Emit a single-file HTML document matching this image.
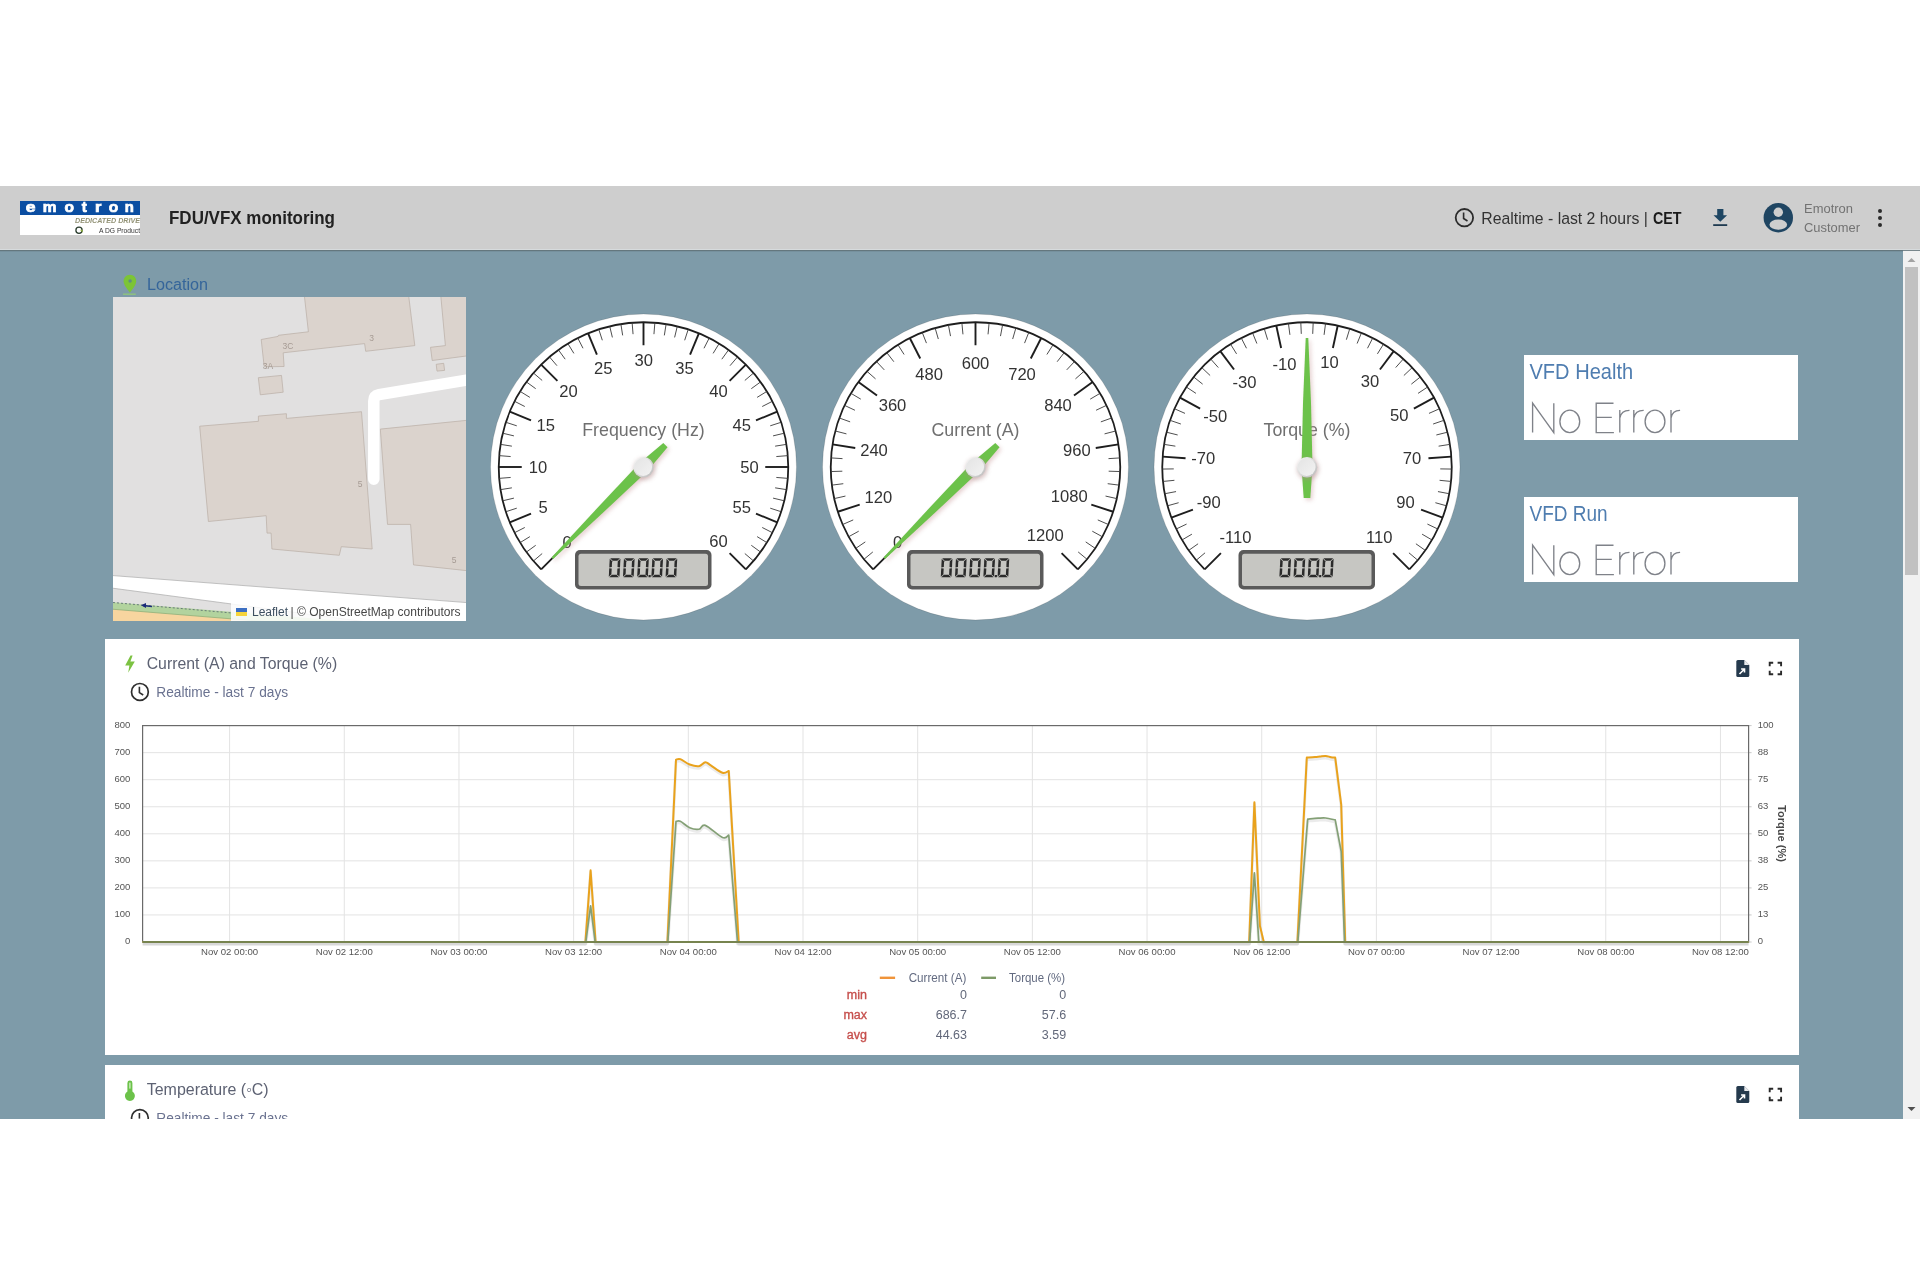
<!DOCTYPE html>
<html><head><meta charset="utf-8"><style>
html,body{margin:0;padding:0;background:#fff;}
svg{display:block;will-change:transform;font-family:'Liberation Sans', sans-serif;}
</style></head><body>
<svg width="1920" height="1280" viewBox="0 0 1920 1280">
<defs><filter id="blur2" x="-50%" y="-50%" width="200%" height="200%"><feGaussianBlur stdDeviation="2"/></filter><linearGradient id="hubOuter" x1="0" y1="0" x2="1" y2="1"><stop offset="0" stop-color="#fbfbfb"/><stop offset="1" stop-color="#b9b9b9"/></linearGradient><linearGradient id="hubInner" x1="0" y1="0" x2="1" y2="1"><stop offset="0" stop-color="#e4e4e4"/><stop offset="1" stop-color="#f2f2f2"/></linearGradient></defs>
<rect x="0" y="0" width="1920" height="1280" fill="#fff"/>
<rect x="0" y="250" width="1903" height="869" fill="#7e9ba9"/>
<rect x="0" y="186" width="1920" height="64" fill="#cecece"/>
<rect x="0" y="249.2" width="1920" height="1" fill="#d9dee0"/><rect x="0" y="250.2" width="1920" height="1" fill="#5a6c72"/>
<rect x="1903" y="251" width="17" height="868" fill="#f1f1f1"/>
<rect x="1905" y="267" width="13" height="308" fill="#c1c1c1"/>
<path d="M1907.5 262 L1911.5 258 L1915.5 262 Z" fill="#a3a3a3"/>
<path d="M1907.5 1107 L1911.5 1111 L1915.5 1107 Z" fill="#505050"/>
<rect x="20" y="201" width="120" height="34" fill="#fff"/>
<rect x="20" y="201" width="120" height="14" fill="#0b4ea2"/>
<text x="25.8" y="211.9" font-size="14.8" fill="#fff" font-weight="bold" text-anchor="start" textLength="9.8" lengthAdjust="spacingAndGlyphs" stroke="#fff" stroke-width="0.7">e</text>
<text x="42.8" y="211.9" font-size="14.8" fill="#fff" font-weight="bold" text-anchor="start" textLength="13.8" lengthAdjust="spacingAndGlyphs" stroke="#fff" stroke-width="0.7">m</text>
<text x="64.4" y="211.9" font-size="14.8" fill="#fff" font-weight="bold" text-anchor="start" textLength="9.5" lengthAdjust="spacingAndGlyphs" stroke="#fff" stroke-width="0.7">o</text>
<text x="81.7" y="211.9" font-size="14.8" fill="#fff" font-weight="bold" text-anchor="start" textLength="5.1" lengthAdjust="spacingAndGlyphs" stroke="#fff" stroke-width="0.7">t</text>
<text x="94.9" y="211.9" font-size="14.8" fill="#fff" font-weight="bold" text-anchor="start" textLength="6.4" lengthAdjust="spacingAndGlyphs" stroke="#fff" stroke-width="0.7">r</text>
<text x="108.8" y="211.9" font-size="14.8" fill="#fff" font-weight="bold" text-anchor="start" textLength="9.5" lengthAdjust="spacingAndGlyphs" stroke="#fff" stroke-width="0.7">o</text>
<text x="124.7" y="211.9" font-size="14.8" fill="#fff" font-weight="bold" text-anchor="start" textLength="9.1" lengthAdjust="spacingAndGlyphs" stroke="#fff" stroke-width="0.7">n</text>
<text x="75" y="222.8" font-size="6.8" fill="#939377" font-weight="bold" text-anchor="start" textLength="65" lengthAdjust="spacingAndGlyphs" font-style="italic">DEDICATED DRIVE</text>
<circle cx="79" cy="230.3" r="3.1" fill="none" stroke="#2c3e2f" stroke-width="1.3"/><path d="M80.5 230.3 h1.6 v1.8" stroke="#9bbf3a" stroke-width="1" fill="none"/>
<text x="99" y="233" font-size="7.2" fill="#333" text-anchor="start" textLength="41" lengthAdjust="spacingAndGlyphs">A DG Product</text>
<text x="169" y="223.8" font-size="18.7" fill="#212121" font-weight="bold" text-anchor="start" textLength="166" lengthAdjust="spacingAndGlyphs">FDU/VFX monitoring</text>
<circle cx="1464.4" cy="217.7" r="8.7" fill="none" stroke="#2b2b2b" stroke-width="1.8"/>
<path d="M1463.6 212.5 V218.5 L1467.5 221" fill="none" stroke="#2b2b2b" stroke-width="1.6"/>
<text x="1481.3" y="223.7" font-size="17.1" fill="#333" text-anchor="start" textLength="166.5" lengthAdjust="spacingAndGlyphs">Realtime - last 2 hours |</text>
<text x="1653" y="223.7" font-size="17.1" fill="#1a1a1a" font-weight="bold" text-anchor="start" textLength="28.5" lengthAdjust="spacingAndGlyphs">CET</text>
<path d="M1717.2 209 h6.2 v6.2 h3.7 l-6.8 6.5 l-6.8 -6.5 h3.7 z" fill="#1e4663"/><rect x="1713.2" y="224.2" width="14" height="1.8" fill="#1e3a50"/>
<circle cx="1778.3" cy="217.7" r="14.7" fill="#1f4562"/>
<circle cx="1778.3" cy="212.2" r="4.7" fill="#cecece"/>
<ellipse cx="1778.3" cy="224.7" rx="8.8" ry="5.1" fill="#cecece"/>
<text x="1804" y="213" font-size="12.6" fill="#727272" text-anchor="start" textLength="49" lengthAdjust="spacingAndGlyphs">Emotron</text>
<text x="1804" y="232" font-size="12.6" fill="#727272" text-anchor="start" textLength="56" lengthAdjust="spacingAndGlyphs">Customer</text>
<circle cx="1880" cy="211" r="2" fill="#2b2b2b"/>
<circle cx="1880" cy="218" r="2" fill="#2b2b2b"/>
<circle cx="1880" cy="225" r="2" fill="#2b2b2b"/>
<g>
<path d="M129.9 274.8 c-3.5 0 -6.3 2.8 -6.3 6.4 c0 4.6 6.3 11.2 6.3 11.2 s6.3 -6.6 6.3 -11.2 c0 -3.6 -2.8 -6.4 -6.3 -6.4 z" fill="#7cc436"/>
<circle cx="130.1" cy="281" r="1.7" fill="#5f8f80"/>
<rect x="123" y="293.4" width="12.8" height="1.6" fill="#8cbf82"/>
<text x="147" y="289.8" font-size="17.3" fill="#35659a" text-anchor="start" textLength="61" lengthAdjust="spacingAndGlyphs">Location</text>
</g>
<svg x="113" y="297" width="353" height="324" viewBox="113 297 353 324" overflow="hidden">
<rect x="113" y="297" width="353" height="324" fill="#e1e0e0"/>
<polygon points="304.4,296.0 408.7,296.0 414.8,345.6 365.7,351.3 364.6,343.6 283.2,352.8 284.1,366.5 264.2,366.8 261.2,339.5 278.1,336.4 278.4,335.3 308.4,331.8" fill="#dbd3cd" stroke="#b9aea5" stroke-width="0.7"/>
<polygon points="258.3,377.7 281.5,375.4 283.2,392.2 260.3,394.8" fill="#dbd3cd" stroke="#b9aea5" stroke-width="0.7"/>
<polygon points="440.8,296.0 470.0,296.0 470.0,355.5 432.2,360.5 430.5,347.3 445.4,345.6" fill="#dbd3cd" stroke="#b9aea5" stroke-width="0.7"/>
<polygon points="436.2,364.3 443.7,363.3 444.6,370.4 437.0,371.1" fill="#dbd3cd" stroke="#b9aea5" stroke-width="0.7"/>
<polygon points="199.7,426.2 258.4,421.3 258.4,416.1 286.4,413.7 286.4,418.4 361.5,411.7 372.2,549.0 341.3,546.7 339.3,555.3 271.9,549.0 271.1,533.1 267.0,533.1 266.2,515.7 208.4,521.5" fill="#dbd3cd" stroke="#b9aea5" stroke-width="0.7"/>
<polygon points="380.3,429.1 470.0,420.0 470.0,571.0 413.5,564.9 410.6,524.4 387.5,524.4" fill="#dbd3cd" stroke="#b9aea5" stroke-width="0.7"/>
<path d="M373.8 479.2 V401 Q373.8 395.6 379 394.6 L480 377.8" fill="none" stroke="#fff" stroke-width="11.5" stroke-linecap="round" stroke-linejoin="round"/>
<path d="M100 574.6 L480 603.6 L480 637 L100 586.5 Z" fill="#fff"/><path d="M100 574.6 L480 603.6 M100 586.5 L480 637" stroke="#a9a9a9" stroke-width="0.7" fill="none"/>
<path d="M100 601.3 L480 632 L100 632 Z" fill="#b2d39e"/>
<path d="M100 608.2 L480 639 L100 639 Z" fill="#f7d59f"/><path d="M100 608.2 L480 639" stroke="#8fb07a" stroke-width="0.8"/>
<path d="M113 602.5 L232 613" fill="none" stroke="#56666e" stroke-width="0.8" stroke-dasharray="2,2"/>
<path d="M143 605.5 L152 606.5" stroke="#1a2a7a" stroke-width="1.4"/><path d="M141 605.3 L146 603 L146 608 Z" fill="#1a2a7a"/>
<text x="371.5" y="340.5" font-size="8.5" fill="#a69b94" text-anchor="middle">3</text>
<text x="288" y="348.5" font-size="8.5" fill="#a69b94" text-anchor="middle">3C</text>
<text x="268" y="368.5" font-size="8.5" fill="#a69b94" text-anchor="middle">3A</text>
<text x="360" y="486.5" font-size="8.5" fill="#a69b94" text-anchor="middle">5</text>
<text x="454" y="562.5" font-size="8.5" fill="#a69b94" text-anchor="middle">5</text>
<rect x="231" y="603" width="235" height="18" fill="#fff" opacity="0.85"/>
<rect x="236" y="608" width="11" height="4" fill="#3c6fc2"/><rect x="236" y="612" width="11" height="4" fill="#f5d43a"/>
<text x="252" y="616.3" font-size="12" fill="#3d4f60" text-anchor="start" textLength="36" lengthAdjust="spacingAndGlyphs">Leaflet</text>
<text x="290.5" y="616.3" font-size="12" fill="#474747" text-anchor="start" textLength="170" lengthAdjust="spacingAndGlyphs">| © OpenStreetMap contributors</text>
</svg>
<rect x="1524" y="355" width="274" height="85" fill="#fff"/>
<text x="1529.5" y="378.7" font-size="21.2" fill="#4f7db0" text-anchor="start" textLength="103.6" lengthAdjust="spacingAndGlyphs">VFD Health</text>
<path d="M1532.6 432.6 V403.2 L1553.8 432.6 V403.2 M1613.5 403.2 H1596.2 V432.6 H1613.9 M1596.2 417.3 H1611.8 M1619.8 432.6 V410.1 M1619.8 418 Q1621.3 410.3 1629.5 410.40000000000003 M1633.8 432.6 V410.1 M1633.8 418 Q1635.3 410.3 1643.7 410.40000000000003 M1671 432.6 V410.1 M1671 418 Q1672.5 410.3 1680.1 410.40000000000003" fill="none" stroke="#7f8289" stroke-width="1.35"/><ellipse cx="1569.8" cy="421.4" rx="9.9" ry="11.2" fill="none" stroke="#7f8289" stroke-width="1.35"/><ellipse cx="1655" cy="421.4" rx="9.9" ry="11.2" fill="none" stroke="#7f8289" stroke-width="1.35"/>
<rect x="1524" y="497" width="274" height="85" fill="#fff"/>
<text x="1529.5" y="520.7" font-size="21.2" fill="#4f7db0" text-anchor="start" textLength="78.2" lengthAdjust="spacingAndGlyphs">VFD Run</text>
<path d="M1532.6 574.6 V545.2 L1553.8 574.6 V545.2 M1613.5 545.2 H1596.2 V574.6 H1613.9 M1596.2 559.3 H1611.8 M1619.8 574.6 V552.1 M1619.8 560 Q1621.3 552.3000000000001 1629.5 552.4 M1633.8 574.6 V552.1 M1633.8 560 Q1635.3 552.3000000000001 1643.7 552.4 M1671 574.6 V552.1 M1671 560 Q1672.5 552.3000000000001 1680.1 552.4" fill="none" stroke="#7f8289" stroke-width="1.35"/><ellipse cx="1569.8" cy="563.4" rx="9.9" ry="11.2" fill="none" stroke="#7f8289" stroke-width="1.35"/><ellipse cx="1655" cy="563.4" rx="9.9" ry="11.2" fill="none" stroke="#7f8289" stroke-width="1.35"/>
<circle cx="643.5" cy="467" r="153" fill="#fff" stroke="#000" stroke-opacity="0.12" stroke-width="1"/>
<path d="M541.15 569.35 A144.75 144.75 0 1 1 745.85 569.35" fill="none" stroke="#1e1e1e" stroke-width="1.8"/>
<line x1="541.15" y1="569.35" x2="557.41" y2="553.09" stroke="#1e1e1e" stroke-width="1.9"/>
<line x1="533.43" y1="561.01" x2="542.18" y2="553.54" stroke="#3a3a3a" stroke-width="0.9"/>
<line x1="526.39" y1="552.08" x2="535.70" y2="545.32" stroke="#3a3a3a" stroke-width="0.9"/>
<line x1="520.08" y1="542.63" x2="529.89" y2="536.62" stroke="#3a3a3a" stroke-width="0.9"/>
<line x1="514.53" y1="532.72" x2="524.77" y2="527.49" stroke="#3a3a3a" stroke-width="0.9"/>
<text x="567.2" y="548.2" font-size="16.6" fill="#333" text-anchor="middle">0</text>
<line x1="509.77" y1="522.39" x2="531.02" y2="513.59" stroke="#1e1e1e" stroke-width="1.9"/>
<line x1="505.83" y1="511.73" x2="516.77" y2="508.18" stroke="#3a3a3a" stroke-width="0.9"/>
<line x1="502.75" y1="500.79" x2="513.93" y2="498.11" stroke="#3a3a3a" stroke-width="0.9"/>
<line x1="500.53" y1="489.64" x2="511.89" y2="487.84" stroke="#3a3a3a" stroke-width="0.9"/>
<line x1="499.20" y1="478.36" x2="510.66" y2="477.45" stroke="#3a3a3a" stroke-width="0.9"/>
<text x="543.2" y="513.4" font-size="16.6" fill="#333" text-anchor="middle">5</text>
<line x1="498.75" y1="467.00" x2="521.75" y2="467.00" stroke="#1e1e1e" stroke-width="1.9"/>
<line x1="499.20" y1="455.64" x2="510.66" y2="456.55" stroke="#3a3a3a" stroke-width="0.9"/>
<line x1="500.53" y1="444.36" x2="511.89" y2="446.16" stroke="#3a3a3a" stroke-width="0.9"/>
<line x1="502.75" y1="433.21" x2="513.93" y2="435.89" stroke="#3a3a3a" stroke-width="0.9"/>
<line x1="505.83" y1="422.27" x2="516.77" y2="425.82" stroke="#3a3a3a" stroke-width="0.9"/>
<text x="538" y="472.9" font-size="16.6" fill="#333" text-anchor="middle">10</text>
<line x1="509.77" y1="411.61" x2="531.02" y2="420.41" stroke="#1e1e1e" stroke-width="1.9"/>
<line x1="514.53" y1="401.28" x2="524.77" y2="406.51" stroke="#3a3a3a" stroke-width="0.9"/>
<line x1="520.08" y1="391.37" x2="529.89" y2="397.38" stroke="#3a3a3a" stroke-width="0.9"/>
<line x1="526.39" y1="381.92" x2="535.70" y2="388.68" stroke="#3a3a3a" stroke-width="0.9"/>
<line x1="533.43" y1="372.99" x2="542.18" y2="380.46" stroke="#3a3a3a" stroke-width="0.9"/>
<text x="545.8" y="431.4" font-size="16.6" fill="#333" text-anchor="middle">15</text>
<line x1="541.15" y1="364.65" x2="557.41" y2="380.91" stroke="#1e1e1e" stroke-width="1.9"/>
<line x1="549.49" y1="356.93" x2="556.96" y2="365.68" stroke="#3a3a3a" stroke-width="0.9"/>
<line x1="558.42" y1="349.89" x2="565.18" y2="359.20" stroke="#3a3a3a" stroke-width="0.9"/>
<line x1="567.87" y1="343.58" x2="573.88" y2="353.39" stroke="#3a3a3a" stroke-width="0.9"/>
<line x1="577.78" y1="338.03" x2="583.01" y2="348.27" stroke="#3a3a3a" stroke-width="0.9"/>
<text x="568.4" y="397.3" font-size="16.6" fill="#333" text-anchor="middle">20</text>
<line x1="588.11" y1="333.27" x2="596.91" y2="354.52" stroke="#1e1e1e" stroke-width="1.9"/>
<line x1="598.77" y1="329.33" x2="602.32" y2="340.27" stroke="#3a3a3a" stroke-width="0.9"/>
<line x1="609.71" y1="326.25" x2="612.39" y2="337.43" stroke="#3a3a3a" stroke-width="0.9"/>
<line x1="620.86" y1="324.03" x2="622.66" y2="335.39" stroke="#3a3a3a" stroke-width="0.9"/>
<line x1="632.14" y1="322.70" x2="633.05" y2="334.16" stroke="#3a3a3a" stroke-width="0.9"/>
<text x="603.3" y="374.1" font-size="16.6" fill="#333" text-anchor="middle">25</text>
<line x1="643.50" y1="322.25" x2="643.50" y2="345.25" stroke="#1e1e1e" stroke-width="1.9"/>
<line x1="654.86" y1="322.70" x2="653.95" y2="334.16" stroke="#3a3a3a" stroke-width="0.9"/>
<line x1="666.14" y1="324.03" x2="664.34" y2="335.39" stroke="#3a3a3a" stroke-width="0.9"/>
<line x1="677.29" y1="326.25" x2="674.61" y2="337.43" stroke="#3a3a3a" stroke-width="0.9"/>
<line x1="688.23" y1="329.33" x2="684.68" y2="340.27" stroke="#3a3a3a" stroke-width="0.9"/>
<text x="643.7" y="366.4" font-size="16.6" fill="#333" text-anchor="middle">30</text>
<line x1="698.89" y1="333.27" x2="690.09" y2="354.52" stroke="#1e1e1e" stroke-width="1.9"/>
<line x1="709.22" y1="338.03" x2="703.99" y2="348.27" stroke="#3a3a3a" stroke-width="0.9"/>
<line x1="719.13" y1="343.58" x2="713.12" y2="353.39" stroke="#3a3a3a" stroke-width="0.9"/>
<line x1="728.58" y1="349.89" x2="721.82" y2="359.20" stroke="#3a3a3a" stroke-width="0.9"/>
<line x1="737.51" y1="356.93" x2="730.04" y2="365.68" stroke="#3a3a3a" stroke-width="0.9"/>
<text x="684.5" y="374.1" font-size="16.6" fill="#333" text-anchor="middle">35</text>
<line x1="745.85" y1="364.65" x2="729.59" y2="380.91" stroke="#1e1e1e" stroke-width="1.9"/>
<line x1="753.57" y1="372.99" x2="744.82" y2="380.46" stroke="#3a3a3a" stroke-width="0.9"/>
<line x1="760.61" y1="381.92" x2="751.30" y2="388.68" stroke="#3a3a3a" stroke-width="0.9"/>
<line x1="766.92" y1="391.37" x2="757.11" y2="397.38" stroke="#3a3a3a" stroke-width="0.9"/>
<line x1="772.47" y1="401.28" x2="762.23" y2="406.51" stroke="#3a3a3a" stroke-width="0.9"/>
<text x="718.5" y="397.3" font-size="16.6" fill="#333" text-anchor="middle">40</text>
<line x1="777.23" y1="411.61" x2="755.98" y2="420.41" stroke="#1e1e1e" stroke-width="1.9"/>
<line x1="781.17" y1="422.27" x2="770.23" y2="425.82" stroke="#3a3a3a" stroke-width="0.9"/>
<line x1="784.25" y1="433.21" x2="773.07" y2="435.89" stroke="#3a3a3a" stroke-width="0.9"/>
<line x1="786.47" y1="444.36" x2="775.11" y2="446.16" stroke="#3a3a3a" stroke-width="0.9"/>
<line x1="787.80" y1="455.64" x2="776.34" y2="456.55" stroke="#3a3a3a" stroke-width="0.9"/>
<text x="741.7" y="431.4" font-size="16.6" fill="#333" text-anchor="middle">45</text>
<line x1="788.25" y1="467.00" x2="765.25" y2="467.00" stroke="#1e1e1e" stroke-width="1.9"/>
<line x1="787.80" y1="478.36" x2="776.34" y2="477.45" stroke="#3a3a3a" stroke-width="0.9"/>
<line x1="786.47" y1="489.64" x2="775.11" y2="487.84" stroke="#3a3a3a" stroke-width="0.9"/>
<line x1="784.25" y1="500.79" x2="773.07" y2="498.11" stroke="#3a3a3a" stroke-width="0.9"/>
<line x1="781.17" y1="511.73" x2="770.23" y2="508.18" stroke="#3a3a3a" stroke-width="0.9"/>
<text x="749.5" y="472.9" font-size="16.6" fill="#333" text-anchor="middle">50</text>
<line x1="777.23" y1="522.39" x2="755.98" y2="513.59" stroke="#1e1e1e" stroke-width="1.9"/>
<line x1="772.47" y1="532.72" x2="762.23" y2="527.49" stroke="#3a3a3a" stroke-width="0.9"/>
<line x1="766.92" y1="542.63" x2="757.11" y2="536.62" stroke="#3a3a3a" stroke-width="0.9"/>
<line x1="760.61" y1="552.08" x2="751.30" y2="545.32" stroke="#3a3a3a" stroke-width="0.9"/>
<line x1="753.57" y1="561.01" x2="744.82" y2="553.54" stroke="#3a3a3a" stroke-width="0.9"/>
<text x="741.7" y="513.4" font-size="16.6" fill="#333" text-anchor="middle">55</text>
<line x1="745.85" y1="569.35" x2="729.59" y2="553.09" stroke="#1e1e1e" stroke-width="1.9"/>
<text x="718.5" y="547.4" font-size="16.6" fill="#333" text-anchor="middle">60</text>
<text x="643.5" y="436" font-size="17.8" fill="#6f6f6f" text-anchor="middle">Frequency (Hz)</text>
<rect x="575.0" y="550" width="136.5" height="39.5" rx="5" fill="#5a5a5a"/>
<rect x="578.5" y="553.8" width="129.5" height="32.2" rx="2.5" fill="#c6c6c2"/>
<g transform="translate(30.26 0) skewX(-3)">
<polygon points="609.25,558.30 618.95,558.30 616.45,560.80 611.75,560.80" fill="#2b2b2b"/>
<polygon points="609.25,577.30 618.95,577.30 616.45,574.80 611.75,574.80" fill="#2b2b2b"/>
<polygon points="608.75,558.80 611.25,561.30 611.25,567.00 608.75,567.40" fill="#2b2b2b"/>
<polygon points="608.75,576.80 611.25,574.30 611.25,568.60 608.75,568.20" fill="#2b2b2b"/>
<polygon points="619.45,558.80 616.95,561.30 616.95,567.00 619.45,567.40" fill="#2b2b2b"/>
<polygon points="619.45,576.80 616.95,574.30 616.95,568.60 619.45,568.20" fill="#2b2b2b"/>
<polygon points="623.45,558.30 633.15,558.30 630.65,560.80 625.95,560.80" fill="#2b2b2b"/>
<polygon points="623.45,577.30 633.15,577.30 630.65,574.80 625.95,574.80" fill="#2b2b2b"/>
<polygon points="622.95,558.80 625.45,561.30 625.45,567.00 622.95,567.40" fill="#2b2b2b"/>
<polygon points="622.95,576.80 625.45,574.30 625.45,568.60 622.95,568.20" fill="#2b2b2b"/>
<polygon points="633.65,558.80 631.15,561.30 631.15,567.00 633.65,567.40" fill="#2b2b2b"/>
<polygon points="633.65,576.80 631.15,574.30 631.15,568.60 633.65,568.20" fill="#2b2b2b"/>
<polygon points="637.65,558.30 647.35,558.30 644.85,560.80 640.15,560.80" fill="#2b2b2b"/>
<polygon points="637.65,577.30 647.35,577.30 644.85,574.80 640.15,574.80" fill="#2b2b2b"/>
<polygon points="637.15,558.80 639.65,561.30 639.65,567.00 637.15,567.40" fill="#2b2b2b"/>
<polygon points="637.15,576.80 639.65,574.30 639.65,568.60 637.15,568.20" fill="#2b2b2b"/>
<polygon points="647.85,558.80 645.35,561.30 645.35,567.00 647.85,567.40" fill="#2b2b2b"/>
<polygon points="647.85,576.80 645.35,574.30 645.35,568.60 647.85,568.20" fill="#2b2b2b"/>
<rect x="648.45" y="574.90" width="2.2" height="2.4" fill="#2b2b2b"/>
<polygon points="651.85,558.30 661.55,558.30 659.05,560.80 654.35,560.80" fill="#2b2b2b"/>
<polygon points="651.85,577.30 661.55,577.30 659.05,574.80 654.35,574.80" fill="#2b2b2b"/>
<polygon points="651.35,558.80 653.85,561.30 653.85,567.00 651.35,567.40" fill="#2b2b2b"/>
<polygon points="651.35,576.80 653.85,574.30 653.85,568.60 651.35,568.20" fill="#2b2b2b"/>
<polygon points="662.05,558.80 659.55,561.30 659.55,567.00 662.05,567.40" fill="#2b2b2b"/>
<polygon points="662.05,576.80 659.55,574.30 659.55,568.60 662.05,568.20" fill="#2b2b2b"/>
<polygon points="666.05,558.30 675.75,558.30 673.25,560.80 668.55,560.80" fill="#2b2b2b"/>
<polygon points="666.05,577.30 675.75,577.30 673.25,574.80 668.55,574.80" fill="#2b2b2b"/>
<polygon points="665.55,558.80 668.05,561.30 668.05,567.00 665.55,567.40" fill="#2b2b2b"/>
<polygon points="665.55,576.80 668.05,574.30 668.05,568.60 665.55,568.20" fill="#2b2b2b"/>
<polygon points="676.25,558.80 673.75,561.30 673.75,567.00 676.25,567.40" fill="#2b2b2b"/>
<polygon points="676.25,576.80 673.75,574.30 673.75,568.60 676.25,568.20" fill="#2b2b2b"/>
</g>
<path d="M667.54 447.20 L647.46 470.96 L600.79 514.80 L553.06 558.99 L551.51 557.44 L595.70 509.71 L639.54 463.04 L663.30 442.96 Z" fill="#c89a9a" opacity="0.45" transform="translate(2,2.2)" filter="url(#blur2)"/>
<path d="M667.54 447.20 L647.46 470.96 L600.79 514.80 L553.06 558.99 L551.51 557.44 L595.70 509.71 L639.54 463.04 L663.30 442.96 Z" fill="#6cc24a"/>
<circle cx="644.5" cy="469" r="11" fill="#b08a8a" opacity="0.45" filter="url(#blur2)"/>
<circle cx="643.5" cy="467.3" r="10.3" fill="url(#hubOuter)"/>
<circle cx="643.2" cy="467" r="8.9" fill="url(#hubInner)"/>
<circle cx="975.5" cy="467" r="153" fill="#fff" stroke="#000" stroke-opacity="0.12" stroke-width="1"/>
<path d="M873.15 569.35 A144.75 144.75 0 1 1 1077.85 569.35" fill="none" stroke="#1e1e1e" stroke-width="1.8"/>
<line x1="873.15" y1="569.35" x2="889.41" y2="553.09" stroke="#1e1e1e" stroke-width="1.9"/>
<line x1="863.97" y1="559.27" x2="872.83" y2="551.94" stroke="#3a3a3a" stroke-width="0.9"/>
<line x1="855.78" y1="548.36" x2="865.29" y2="541.90" stroke="#3a3a3a" stroke-width="0.9"/>
<line x1="848.65" y1="536.73" x2="858.73" y2="531.19" stroke="#3a3a3a" stroke-width="0.9"/>
<line x1="842.66" y1="524.49" x2="853.21" y2="519.92" stroke="#3a3a3a" stroke-width="0.9"/>
<text x="897.7" y="548.2" font-size="16.6" fill="#333" text-anchor="middle">0</text>
<line x1="837.83" y1="511.73" x2="859.71" y2="504.62" stroke="#1e1e1e" stroke-width="1.9"/>
<line x1="834.24" y1="498.58" x2="845.46" y2="496.07" stroke="#3a3a3a" stroke-width="0.9"/>
<line x1="831.89" y1="485.14" x2="843.30" y2="483.70" stroke="#3a3a3a" stroke-width="0.9"/>
<line x1="830.82" y1="471.55" x2="842.32" y2="471.19" stroke="#3a3a3a" stroke-width="0.9"/>
<line x1="831.04" y1="457.91" x2="842.51" y2="458.63" stroke="#3a3a3a" stroke-width="0.9"/>
<text x="878.3" y="503.1" font-size="16.6" fill="#333" text-anchor="middle">120</text>
<line x1="832.53" y1="444.36" x2="855.25" y2="447.95" stroke="#1e1e1e" stroke-width="1.9"/>
<line x1="835.30" y1="431.00" x2="846.44" y2="433.86" stroke="#3a3a3a" stroke-width="0.9"/>
<line x1="839.31" y1="417.97" x2="850.13" y2="421.86" stroke="#3a3a3a" stroke-width="0.9"/>
<line x1="844.53" y1="405.37" x2="854.93" y2="410.26" stroke="#3a3a3a" stroke-width="0.9"/>
<line x1="850.91" y1="393.32" x2="860.81" y2="399.17" stroke="#3a3a3a" stroke-width="0.9"/>
<text x="874" y="456.1" font-size="16.6" fill="#333" text-anchor="middle">240</text>
<line x1="858.39" y1="381.92" x2="877.00" y2="395.44" stroke="#1e1e1e" stroke-width="1.9"/>
<line x1="866.92" y1="371.28" x2="875.55" y2="378.88" stroke="#3a3a3a" stroke-width="0.9"/>
<line x1="876.41" y1="361.48" x2="884.28" y2="369.86" stroke="#3a3a3a" stroke-width="0.9"/>
<line x1="886.78" y1="352.63" x2="893.83" y2="361.71" stroke="#3a3a3a" stroke-width="0.9"/>
<line x1="897.94" y1="344.78" x2="904.10" y2="354.49" stroke="#3a3a3a" stroke-width="0.9"/>
<text x="892.5" y="411.0" font-size="16.6" fill="#333" text-anchor="middle">360</text>
<line x1="909.78" y1="338.03" x2="920.23" y2="358.52" stroke="#1e1e1e" stroke-width="1.9"/>
<line x1="922.21" y1="332.41" x2="926.45" y2="343.11" stroke="#3a3a3a" stroke-width="0.9"/>
<line x1="935.12" y1="328.00" x2="938.32" y2="339.04" stroke="#3a3a3a" stroke-width="0.9"/>
<line x1="948.38" y1="324.81" x2="950.53" y2="336.11" stroke="#3a3a3a" stroke-width="0.9"/>
<line x1="961.88" y1="322.89" x2="962.96" y2="334.34" stroke="#3a3a3a" stroke-width="0.9"/>
<text x="929.1" y="380.1" font-size="16.6" fill="#333" text-anchor="middle">480</text>
<line x1="975.50" y1="322.25" x2="975.50" y2="345.25" stroke="#1e1e1e" stroke-width="1.9"/>
<line x1="989.12" y1="322.89" x2="988.04" y2="334.34" stroke="#3a3a3a" stroke-width="0.9"/>
<line x1="1002.62" y1="324.81" x2="1000.47" y2="336.11" stroke="#3a3a3a" stroke-width="0.9"/>
<line x1="1015.88" y1="328.00" x2="1012.68" y2="339.04" stroke="#3a3a3a" stroke-width="0.9"/>
<line x1="1028.79" y1="332.41" x2="1024.55" y2="343.11" stroke="#3a3a3a" stroke-width="0.9"/>
<text x="975.5" y="369.0" font-size="16.6" fill="#333" text-anchor="middle">600</text>
<line x1="1041.22" y1="338.03" x2="1030.77" y2="358.52" stroke="#1e1e1e" stroke-width="1.9"/>
<line x1="1053.06" y1="344.78" x2="1046.90" y2="354.49" stroke="#3a3a3a" stroke-width="0.9"/>
<line x1="1064.22" y1="352.63" x2="1057.17" y2="361.71" stroke="#3a3a3a" stroke-width="0.9"/>
<line x1="1074.59" y1="361.48" x2="1066.72" y2="369.86" stroke="#3a3a3a" stroke-width="0.9"/>
<line x1="1084.08" y1="371.28" x2="1075.45" y2="378.88" stroke="#3a3a3a" stroke-width="0.9"/>
<text x="1022" y="380.1" font-size="16.6" fill="#333" text-anchor="middle">720</text>
<line x1="1092.61" y1="381.92" x2="1074.00" y2="395.44" stroke="#1e1e1e" stroke-width="1.9"/>
<line x1="1100.09" y1="393.32" x2="1090.19" y2="399.17" stroke="#3a3a3a" stroke-width="0.9"/>
<line x1="1106.47" y1="405.37" x2="1096.07" y2="410.26" stroke="#3a3a3a" stroke-width="0.9"/>
<line x1="1111.69" y1="417.97" x2="1100.87" y2="421.86" stroke="#3a3a3a" stroke-width="0.9"/>
<line x1="1115.70" y1="431.00" x2="1104.56" y2="433.86" stroke="#3a3a3a" stroke-width="0.9"/>
<text x="1058" y="411.0" font-size="16.6" fill="#333" text-anchor="middle">840</text>
<line x1="1118.47" y1="444.36" x2="1095.75" y2="447.95" stroke="#1e1e1e" stroke-width="1.9"/>
<line x1="1119.96" y1="457.91" x2="1108.49" y2="458.63" stroke="#3a3a3a" stroke-width="0.9"/>
<line x1="1120.18" y1="471.55" x2="1108.68" y2="471.19" stroke="#3a3a3a" stroke-width="0.9"/>
<line x1="1119.11" y1="485.14" x2="1107.70" y2="483.70" stroke="#3a3a3a" stroke-width="0.9"/>
<line x1="1116.76" y1="498.58" x2="1105.54" y2="496.07" stroke="#3a3a3a" stroke-width="0.9"/>
<text x="1076.9" y="456.1" font-size="16.6" fill="#333" text-anchor="middle">960</text>
<line x1="1113.17" y1="511.73" x2="1091.29" y2="504.62" stroke="#1e1e1e" stroke-width="1.9"/>
<line x1="1108.34" y1="524.49" x2="1097.79" y2="519.92" stroke="#3a3a3a" stroke-width="0.9"/>
<line x1="1102.35" y1="536.73" x2="1092.27" y2="531.19" stroke="#3a3a3a" stroke-width="0.9"/>
<line x1="1095.22" y1="548.36" x2="1085.71" y2="541.90" stroke="#3a3a3a" stroke-width="0.9"/>
<line x1="1087.03" y1="559.27" x2="1078.17" y2="551.94" stroke="#3a3a3a" stroke-width="0.9"/>
<text x="1069.2" y="502.3" font-size="16.6" fill="#333" text-anchor="middle">1080</text>
<line x1="1077.85" y1="569.35" x2="1061.59" y2="553.09" stroke="#1e1e1e" stroke-width="1.9"/>
<text x="1045.2" y="541.0" font-size="16.6" fill="#333" text-anchor="middle">1200</text>
<text x="975.5" y="436" font-size="17.8" fill="#6f6f6f" text-anchor="middle">Current (A)</text>
<rect x="907.0" y="550" width="136.5" height="39.5" rx="5" fill="#5a5a5a"/>
<rect x="910.5" y="553.8" width="129.5" height="32.2" rx="2.5" fill="#c6c6c2"/>
<g transform="translate(30.26 0) skewX(-3)">
<polygon points="941.25,558.30 950.95,558.30 948.45,560.80 943.75,560.80" fill="#2b2b2b"/>
<polygon points="941.25,577.30 950.95,577.30 948.45,574.80 943.75,574.80" fill="#2b2b2b"/>
<polygon points="940.75,558.80 943.25,561.30 943.25,567.00 940.75,567.40" fill="#2b2b2b"/>
<polygon points="940.75,576.80 943.25,574.30 943.25,568.60 940.75,568.20" fill="#2b2b2b"/>
<polygon points="951.45,558.80 948.95,561.30 948.95,567.00 951.45,567.40" fill="#2b2b2b"/>
<polygon points="951.45,576.80 948.95,574.30 948.95,568.60 951.45,568.20" fill="#2b2b2b"/>
<polygon points="955.45,558.30 965.15,558.30 962.65,560.80 957.95,560.80" fill="#2b2b2b"/>
<polygon points="955.45,577.30 965.15,577.30 962.65,574.80 957.95,574.80" fill="#2b2b2b"/>
<polygon points="954.95,558.80 957.45,561.30 957.45,567.00 954.95,567.40" fill="#2b2b2b"/>
<polygon points="954.95,576.80 957.45,574.30 957.45,568.60 954.95,568.20" fill="#2b2b2b"/>
<polygon points="965.65,558.80 963.15,561.30 963.15,567.00 965.65,567.40" fill="#2b2b2b"/>
<polygon points="965.65,576.80 963.15,574.30 963.15,568.60 965.65,568.20" fill="#2b2b2b"/>
<polygon points="969.65,558.30 979.35,558.30 976.85,560.80 972.15,560.80" fill="#2b2b2b"/>
<polygon points="969.65,577.30 979.35,577.30 976.85,574.80 972.15,574.80" fill="#2b2b2b"/>
<polygon points="969.15,558.80 971.65,561.30 971.65,567.00 969.15,567.40" fill="#2b2b2b"/>
<polygon points="969.15,576.80 971.65,574.30 971.65,568.60 969.15,568.20" fill="#2b2b2b"/>
<polygon points="979.85,558.80 977.35,561.30 977.35,567.00 979.85,567.40" fill="#2b2b2b"/>
<polygon points="979.85,576.80 977.35,574.30 977.35,568.60 979.85,568.20" fill="#2b2b2b"/>
<polygon points="983.85,558.30 993.55,558.30 991.05,560.80 986.35,560.80" fill="#2b2b2b"/>
<polygon points="983.85,577.30 993.55,577.30 991.05,574.80 986.35,574.80" fill="#2b2b2b"/>
<polygon points="983.35,558.80 985.85,561.30 985.85,567.00 983.35,567.40" fill="#2b2b2b"/>
<polygon points="983.35,576.80 985.85,574.30 985.85,568.60 983.35,568.20" fill="#2b2b2b"/>
<polygon points="994.05,558.80 991.55,561.30 991.55,567.00 994.05,567.40" fill="#2b2b2b"/>
<polygon points="994.05,576.80 991.55,574.30 991.55,568.60 994.05,568.20" fill="#2b2b2b"/>
<rect x="994.65" y="574.90" width="2.2" height="2.4" fill="#2b2b2b"/>
<polygon points="998.05,558.30 1007.75,558.30 1005.25,560.80 1000.55,560.80" fill="#2b2b2b"/>
<polygon points="998.05,577.30 1007.75,577.30 1005.25,574.80 1000.55,574.80" fill="#2b2b2b"/>
<polygon points="997.55,558.80 1000.05,561.30 1000.05,567.00 997.55,567.40" fill="#2b2b2b"/>
<polygon points="997.55,576.80 1000.05,574.30 1000.05,568.60 997.55,568.20" fill="#2b2b2b"/>
<polygon points="1008.25,558.80 1005.75,561.30 1005.75,567.00 1008.25,567.40" fill="#2b2b2b"/>
<polygon points="1008.25,576.80 1005.75,574.30 1005.75,568.60 1008.25,568.20" fill="#2b2b2b"/>
</g>
<path d="M999.54 447.20 L979.46 470.96 L932.79 514.80 L885.06 558.99 L883.51 557.44 L927.70 509.71 L971.54 463.04 L995.30 442.96 Z" fill="#c89a9a" opacity="0.45" transform="translate(2,2.2)" filter="url(#blur2)"/>
<path d="M999.54 447.20 L979.46 470.96 L932.79 514.80 L885.06 558.99 L883.51 557.44 L927.70 509.71 L971.54 463.04 L995.30 442.96 Z" fill="#6cc24a"/>
<circle cx="976.5" cy="469" r="11" fill="#b08a8a" opacity="0.45" filter="url(#blur2)"/>
<circle cx="975.5" cy="467.3" r="10.3" fill="url(#hubOuter)"/>
<circle cx="975.2" cy="467" r="8.9" fill="url(#hubInner)"/>
<circle cx="1307" cy="467" r="153" fill="#fff" stroke="#000" stroke-opacity="0.12" stroke-width="1"/>
<path d="M1204.65 569.35 A144.75 144.75 0 1 1 1409.35 569.35" fill="none" stroke="#1e1e1e" stroke-width="1.8"/>
<line x1="1204.65" y1="569.35" x2="1220.91" y2="553.09" stroke="#1e1e1e" stroke-width="1.9"/>
<line x1="1196.26" y1="560.22" x2="1205.06" y2="552.81" stroke="#3a3a3a" stroke-width="0.9"/>
<line x1="1188.69" y1="550.40" x2="1198.09" y2="543.78" stroke="#3a3a3a" stroke-width="0.9"/>
<line x1="1181.99" y1="539.97" x2="1191.92" y2="534.17" stroke="#3a3a3a" stroke-width="0.9"/>
<line x1="1176.20" y1="529.01" x2="1186.59" y2="524.08" stroke="#3a3a3a" stroke-width="0.9"/>
<text x="1235.4" y="543.0" font-size="16.6" fill="#333" text-anchor="middle">-110</text>
<line x1="1171.38" y1="517.58" x2="1192.93" y2="509.55" stroke="#1e1e1e" stroke-width="1.9"/>
<line x1="1167.55" y1="505.79" x2="1178.62" y2="502.71" stroke="#3a3a3a" stroke-width="0.9"/>
<line x1="1164.74" y1="493.72" x2="1176.04" y2="491.59" stroke="#3a3a3a" stroke-width="0.9"/>
<line x1="1162.97" y1="481.45" x2="1174.42" y2="480.30" stroke="#3a3a3a" stroke-width="0.9"/>
<line x1="1162.26" y1="469.07" x2="1173.76" y2="468.90" stroke="#3a3a3a" stroke-width="0.9"/>
<text x="1208.8" y="508.2" font-size="16.6" fill="#333" text-anchor="middle">-90</text>
<line x1="1162.62" y1="456.67" x2="1185.56" y2="458.31" stroke="#1e1e1e" stroke-width="1.9"/>
<line x1="1164.03" y1="444.36" x2="1175.39" y2="446.16" stroke="#3a3a3a" stroke-width="0.9"/>
<line x1="1166.49" y1="432.20" x2="1177.66" y2="434.97" stroke="#3a3a3a" stroke-width="0.9"/>
<line x1="1169.99" y1="420.31" x2="1180.87" y2="424.02" stroke="#3a3a3a" stroke-width="0.9"/>
<line x1="1174.49" y1="408.75" x2="1185.01" y2="413.38" stroke="#3a3a3a" stroke-width="0.9"/>
<text x="1203.2" y="464.4" font-size="16.6" fill="#333" text-anchor="middle">-70</text>
<line x1="1179.96" y1="397.63" x2="1200.14" y2="408.65" stroke="#1e1e1e" stroke-width="1.9"/>
<line x1="1186.36" y1="387.01" x2="1195.94" y2="393.37" stroke="#3a3a3a" stroke-width="0.9"/>
<line x1="1193.65" y1="376.98" x2="1202.65" y2="384.13" stroke="#3a3a3a" stroke-width="0.9"/>
<line x1="1201.77" y1="367.61" x2="1210.13" y2="375.51" stroke="#3a3a3a" stroke-width="0.9"/>
<line x1="1210.66" y1="358.97" x2="1218.31" y2="367.55" stroke="#3a3a3a" stroke-width="0.9"/>
<text x="1215.3" y="421.8" font-size="16.6" fill="#333" text-anchor="middle">-50</text>
<line x1="1220.25" y1="351.12" x2="1234.04" y2="369.53" stroke="#1e1e1e" stroke-width="1.9"/>
<line x1="1230.49" y1="344.12" x2="1236.57" y2="353.89" stroke="#3a3a3a" stroke-width="0.9"/>
<line x1="1241.28" y1="338.03" x2="1246.51" y2="348.27" stroke="#3a3a3a" stroke-width="0.9"/>
<line x1="1252.56" y1="332.88" x2="1256.89" y2="343.53" stroke="#3a3a3a" stroke-width="0.9"/>
<line x1="1264.24" y1="328.71" x2="1267.64" y2="339.70" stroke="#3a3a3a" stroke-width="0.9"/>
<text x="1244.4" y="388.3" font-size="16.6" fill="#333" text-anchor="middle">-30</text>
<line x1="1276.23" y1="325.56" x2="1281.12" y2="348.03" stroke="#1e1e1e" stroke-width="1.9"/>
<line x1="1288.45" y1="323.44" x2="1289.92" y2="334.85" stroke="#3a3a3a" stroke-width="0.9"/>
<line x1="1300.80" y1="322.38" x2="1301.29" y2="333.87" stroke="#3a3a3a" stroke-width="0.9"/>
<line x1="1313.20" y1="322.38" x2="1312.71" y2="333.87" stroke="#3a3a3a" stroke-width="0.9"/>
<line x1="1325.55" y1="323.44" x2="1324.08" y2="334.85" stroke="#3a3a3a" stroke-width="0.9"/>
<text x="1284.4" y="370.3" font-size="16.6" fill="#333" text-anchor="middle">-10</text>
<line x1="1337.77" y1="325.56" x2="1332.88" y2="348.03" stroke="#1e1e1e" stroke-width="1.9"/>
<line x1="1349.76" y1="328.71" x2="1346.36" y2="339.70" stroke="#3a3a3a" stroke-width="0.9"/>
<line x1="1361.44" y1="332.88" x2="1357.11" y2="343.53" stroke="#3a3a3a" stroke-width="0.9"/>
<line x1="1372.72" y1="338.03" x2="1367.49" y2="348.27" stroke="#3a3a3a" stroke-width="0.9"/>
<line x1="1383.51" y1="344.12" x2="1377.43" y2="353.89" stroke="#3a3a3a" stroke-width="0.9"/>
<text x="1329.5" y="367.7" font-size="16.6" fill="#333" text-anchor="middle">10</text>
<line x1="1393.75" y1="351.12" x2="1379.96" y2="369.53" stroke="#1e1e1e" stroke-width="1.9"/>
<line x1="1403.34" y1="358.97" x2="1395.69" y2="367.55" stroke="#3a3a3a" stroke-width="0.9"/>
<line x1="1412.23" y1="367.61" x2="1403.87" y2="375.51" stroke="#3a3a3a" stroke-width="0.9"/>
<line x1="1420.35" y1="376.98" x2="1411.35" y2="384.13" stroke="#3a3a3a" stroke-width="0.9"/>
<line x1="1427.64" y1="387.01" x2="1418.06" y2="393.37" stroke="#3a3a3a" stroke-width="0.9"/>
<text x="1370" y="387.0" font-size="16.6" fill="#333" text-anchor="middle">30</text>
<line x1="1434.04" y1="397.63" x2="1413.86" y2="408.65" stroke="#1e1e1e" stroke-width="1.9"/>
<line x1="1439.51" y1="408.75" x2="1428.99" y2="413.38" stroke="#3a3a3a" stroke-width="0.9"/>
<line x1="1444.01" y1="420.31" x2="1433.13" y2="424.02" stroke="#3a3a3a" stroke-width="0.9"/>
<line x1="1447.51" y1="432.20" x2="1436.34" y2="434.97" stroke="#3a3a3a" stroke-width="0.9"/>
<line x1="1449.97" y1="444.36" x2="1438.61" y2="446.16" stroke="#3a3a3a" stroke-width="0.9"/>
<text x="1399.2" y="421.1" font-size="16.6" fill="#333" text-anchor="middle">50</text>
<line x1="1451.38" y1="456.67" x2="1428.44" y2="458.31" stroke="#1e1e1e" stroke-width="1.9"/>
<line x1="1451.74" y1="469.07" x2="1440.24" y2="468.90" stroke="#3a3a3a" stroke-width="0.9"/>
<line x1="1451.03" y1="481.45" x2="1439.58" y2="480.30" stroke="#3a3a3a" stroke-width="0.9"/>
<line x1="1449.26" y1="493.72" x2="1437.96" y2="491.59" stroke="#3a3a3a" stroke-width="0.9"/>
<line x1="1446.45" y1="505.79" x2="1435.38" y2="502.71" stroke="#3a3a3a" stroke-width="0.9"/>
<text x="1412" y="463.6" font-size="16.6" fill="#333" text-anchor="middle">70</text>
<line x1="1442.62" y1="517.58" x2="1421.07" y2="509.55" stroke="#1e1e1e" stroke-width="1.9"/>
<line x1="1437.80" y1="529.01" x2="1427.41" y2="524.08" stroke="#3a3a3a" stroke-width="0.9"/>
<line x1="1432.01" y1="539.97" x2="1422.08" y2="534.17" stroke="#3a3a3a" stroke-width="0.9"/>
<line x1="1425.31" y1="550.40" x2="1415.91" y2="543.78" stroke="#3a3a3a" stroke-width="0.9"/>
<line x1="1417.74" y1="560.22" x2="1408.94" y2="552.81" stroke="#3a3a3a" stroke-width="0.9"/>
<text x="1405.6" y="508.2" font-size="16.6" fill="#333" text-anchor="middle">90</text>
<line x1="1409.35" y1="569.35" x2="1393.09" y2="553.09" stroke="#1e1e1e" stroke-width="1.9"/>
<text x="1379.3" y="543.0" font-size="16.6" fill="#333" text-anchor="middle">110</text>
<text x="1307" y="436" font-size="17.8" fill="#6f6f6f" text-anchor="middle">Torque (%)</text>
<rect x="1238.5" y="550" width="136.5" height="39.5" rx="5" fill="#5a5a5a"/>
<rect x="1242.0" y="553.8" width="129.5" height="32.2" rx="2.5" fill="#c6c6c2"/>
<g transform="translate(30.26 0) skewX(-3)">
<polygon points="1279.85,558.30 1289.55,558.30 1287.05,560.80 1282.35,560.80" fill="#2b2b2b"/>
<polygon points="1279.85,577.30 1289.55,577.30 1287.05,574.80 1282.35,574.80" fill="#2b2b2b"/>
<polygon points="1279.35,558.80 1281.85,561.30 1281.85,567.00 1279.35,567.40" fill="#2b2b2b"/>
<polygon points="1279.35,576.80 1281.85,574.30 1281.85,568.60 1279.35,568.20" fill="#2b2b2b"/>
<polygon points="1290.05,558.80 1287.55,561.30 1287.55,567.00 1290.05,567.40" fill="#2b2b2b"/>
<polygon points="1290.05,576.80 1287.55,574.30 1287.55,568.60 1290.05,568.20" fill="#2b2b2b"/>
<polygon points="1294.05,558.30 1303.75,558.30 1301.25,560.80 1296.55,560.80" fill="#2b2b2b"/>
<polygon points="1294.05,577.30 1303.75,577.30 1301.25,574.80 1296.55,574.80" fill="#2b2b2b"/>
<polygon points="1293.55,558.80 1296.05,561.30 1296.05,567.00 1293.55,567.40" fill="#2b2b2b"/>
<polygon points="1293.55,576.80 1296.05,574.30 1296.05,568.60 1293.55,568.20" fill="#2b2b2b"/>
<polygon points="1304.25,558.80 1301.75,561.30 1301.75,567.00 1304.25,567.40" fill="#2b2b2b"/>
<polygon points="1304.25,576.80 1301.75,574.30 1301.75,568.60 1304.25,568.20" fill="#2b2b2b"/>
<polygon points="1308.25,558.30 1317.95,558.30 1315.45,560.80 1310.75,560.80" fill="#2b2b2b"/>
<polygon points="1308.25,577.30 1317.95,577.30 1315.45,574.80 1310.75,574.80" fill="#2b2b2b"/>
<polygon points="1307.75,558.80 1310.25,561.30 1310.25,567.00 1307.75,567.40" fill="#2b2b2b"/>
<polygon points="1307.75,576.80 1310.25,574.30 1310.25,568.60 1307.75,568.20" fill="#2b2b2b"/>
<polygon points="1318.45,558.80 1315.95,561.30 1315.95,567.00 1318.45,567.40" fill="#2b2b2b"/>
<polygon points="1318.45,576.80 1315.95,574.30 1315.95,568.60 1318.45,568.20" fill="#2b2b2b"/>
<rect x="1319.05" y="574.90" width="2.2" height="2.4" fill="#2b2b2b"/>
<polygon points="1322.45,558.30 1332.15,558.30 1329.65,560.80 1324.95,560.80" fill="#2b2b2b"/>
<polygon points="1322.45,577.30 1332.15,577.30 1329.65,574.80 1324.95,574.80" fill="#2b2b2b"/>
<polygon points="1321.95,558.80 1324.45,561.30 1324.45,567.00 1321.95,567.40" fill="#2b2b2b"/>
<polygon points="1321.95,576.80 1324.45,574.30 1324.45,568.60 1321.95,568.20" fill="#2b2b2b"/>
<polygon points="1332.65,558.80 1330.15,561.30 1330.15,567.00 1332.65,567.40" fill="#2b2b2b"/>
<polygon points="1332.65,576.80 1330.15,574.30 1330.15,568.60 1332.65,568.20" fill="#2b2b2b"/>
</g>
<path d="M1303.70 498.00 L1301.50 467.00 L1303.00 403.00 L1305.70 338.00 L1308.30 338.00 L1311.00 403.00 L1312.50 467.00 L1310.30 498.00 Z" fill="#c89a9a" opacity="0.45" transform="translate(2,2.2)" filter="url(#blur2)"/>
<path d="M1303.70 498.00 L1301.50 467.00 L1303.00 403.00 L1305.70 338.00 L1308.30 338.00 L1311.00 403.00 L1312.50 467.00 L1310.30 498.00 Z" fill="#6cc24a"/>
<circle cx="1308" cy="469" r="11" fill="#b08a8a" opacity="0.45" filter="url(#blur2)"/>
<circle cx="1307" cy="467.3" r="10.3" fill="url(#hubOuter)"/>
<circle cx="1306.7" cy="467" r="8.9" fill="url(#hubInner)"/>
<rect x="105" y="639" width="1694" height="416" fill="#fff"/>
<path d="M130.5 655.4 L125.2 665.6 H129.4 L128.2 672.8 L134.8 661.6 H130.4 L132.6 655.4 Z" fill="#7cc242"/>
<text x="146.7" y="668.6" font-size="16.3" fill="#5d6273" text-anchor="start" textLength="190.5" lengthAdjust="spacingAndGlyphs">Current (A) and Torque (%)</text>
<circle cx="139.9" cy="691.9" r="8.4" fill="none" stroke="#2e2e2e" stroke-width="1.7"/>
<path d="M139.4 686.8 V692.6 L143.2 695" fill="none" stroke="#2e2e2e" stroke-width="1.6"/>
<text x="156.3" y="696.7" font-size="14" fill="#6a7290" text-anchor="start" textLength="131.8" lengthAdjust="spacingAndGlyphs">Realtime - last 7 days</text>
<path d="M1736.3 661.5 q0 -1.5 1.5 -1.5 h6.5 l5 5 v10.5 q0 1.5 -1.5 1.5 h-10 q-1.5 0 -1.5 -1.5 z" fill="#253a4d"/><path d="M1744.3 660 v5 h5 z" fill="#fff" opacity="0.9"/><path d="M1739.5 674 l5 -5 M1741.1 669 h3.4 v3.4" fill="none" stroke="#fff" stroke-width="1.6"/>
<path d="M1769.7 666.3 V662.8 H1773.2 M1777.6000000000001 662.8 H1781.1000000000001 V666.3 M1781.1000000000001 670.6999999999999 V674.1999999999999 H1777.6000000000001 M1773.2 674.1999999999999 H1769.7 V670.6999999999999" fill="none" stroke="#2a2a2a" stroke-width="1.9"/>
<line x1="142.6" y1="914.95" x2="1748.6" y2="914.95" stroke="#e3e3e3" stroke-width="1"/>
<line x1="142.6" y1="887.90" x2="1748.6" y2="887.90" stroke="#e3e3e3" stroke-width="1"/>
<line x1="142.6" y1="860.85" x2="1748.6" y2="860.85" stroke="#e3e3e3" stroke-width="1"/>
<line x1="142.6" y1="833.80" x2="1748.6" y2="833.80" stroke="#e3e3e3" stroke-width="1"/>
<line x1="142.6" y1="806.75" x2="1748.6" y2="806.75" stroke="#e3e3e3" stroke-width="1"/>
<line x1="142.6" y1="779.70" x2="1748.6" y2="779.70" stroke="#e3e3e3" stroke-width="1"/>
<line x1="142.6" y1="752.65" x2="1748.6" y2="752.65" stroke="#e3e3e3" stroke-width="1"/>
<line x1="229.60" y1="725.6" x2="229.60" y2="942.0" stroke="#e3e3e3" stroke-width="1"/>
<text x="229.6" y="954.6" font-size="9.3" fill="#545454" text-anchor="middle" textLength="57" lengthAdjust="spacingAndGlyphs">Nov 02 00:00</text>
<line x1="344.28" y1="725.6" x2="344.28" y2="942.0" stroke="#e3e3e3" stroke-width="1"/>
<text x="344.28" y="954.6" font-size="9.3" fill="#545454" text-anchor="middle" textLength="57" lengthAdjust="spacingAndGlyphs">Nov 02 12:00</text>
<line x1="458.96" y1="725.6" x2="458.96" y2="942.0" stroke="#e3e3e3" stroke-width="1"/>
<text x="458.96" y="954.6" font-size="9.3" fill="#545454" text-anchor="middle" textLength="57" lengthAdjust="spacingAndGlyphs">Nov 03 00:00</text>
<line x1="573.64" y1="725.6" x2="573.64" y2="942.0" stroke="#e3e3e3" stroke-width="1"/>
<text x="573.64" y="954.6" font-size="9.3" fill="#545454" text-anchor="middle" textLength="57" lengthAdjust="spacingAndGlyphs">Nov 03 12:00</text>
<line x1="688.32" y1="725.6" x2="688.32" y2="942.0" stroke="#e3e3e3" stroke-width="1"/>
<text x="688.32" y="954.6" font-size="9.3" fill="#545454" text-anchor="middle" textLength="57" lengthAdjust="spacingAndGlyphs">Nov 04 00:00</text>
<line x1="803.00" y1="725.6" x2="803.00" y2="942.0" stroke="#e3e3e3" stroke-width="1"/>
<text x="803.0" y="954.6" font-size="9.3" fill="#545454" text-anchor="middle" textLength="57" lengthAdjust="spacingAndGlyphs">Nov 04 12:00</text>
<line x1="917.68" y1="725.6" x2="917.68" y2="942.0" stroke="#e3e3e3" stroke-width="1"/>
<text x="917.68" y="954.6" font-size="9.3" fill="#545454" text-anchor="middle" textLength="57" lengthAdjust="spacingAndGlyphs">Nov 05 00:00</text>
<line x1="1032.36" y1="725.6" x2="1032.36" y2="942.0" stroke="#e3e3e3" stroke-width="1"/>
<text x="1032.36" y="954.6" font-size="9.3" fill="#545454" text-anchor="middle" textLength="57" lengthAdjust="spacingAndGlyphs">Nov 05 12:00</text>
<line x1="1147.04" y1="725.6" x2="1147.04" y2="942.0" stroke="#e3e3e3" stroke-width="1"/>
<text x="1147.04" y="954.6" font-size="9.3" fill="#545454" text-anchor="middle" textLength="57" lengthAdjust="spacingAndGlyphs">Nov 06 00:00</text>
<line x1="1261.72" y1="725.6" x2="1261.72" y2="942.0" stroke="#e3e3e3" stroke-width="1"/>
<text x="1261.72" y="954.6" font-size="9.3" fill="#545454" text-anchor="middle" textLength="57" lengthAdjust="spacingAndGlyphs">Nov 06 12:00</text>
<line x1="1376.40" y1="725.6" x2="1376.40" y2="942.0" stroke="#e3e3e3" stroke-width="1"/>
<text x="1376.4" y="954.6" font-size="9.3" fill="#545454" text-anchor="middle" textLength="57" lengthAdjust="spacingAndGlyphs">Nov 07 00:00</text>
<line x1="1491.08" y1="725.6" x2="1491.08" y2="942.0" stroke="#e3e3e3" stroke-width="1"/>
<text x="1491.08" y="954.6" font-size="9.3" fill="#545454" text-anchor="middle" textLength="57" lengthAdjust="spacingAndGlyphs">Nov 07 12:00</text>
<line x1="1605.76" y1="725.6" x2="1605.76" y2="942.0" stroke="#e3e3e3" stroke-width="1"/>
<text x="1605.76" y="954.6" font-size="9.3" fill="#545454" text-anchor="middle" textLength="57" lengthAdjust="spacingAndGlyphs">Nov 08 00:00</text>
<line x1="1720.44" y1="725.6" x2="1720.44" y2="942.0" stroke="#e3e3e3" stroke-width="1"/>
<text x="1720.44" y="954.6" font-size="9.3" fill="#545454" text-anchor="middle" textLength="57" lengthAdjust="spacingAndGlyphs">Nov 08 12:00</text>
<text x="130.4" y="944.4" font-size="9.5" fill="#545454" text-anchor="end">0</text>
<text x="130.4" y="917.35" font-size="9.5" fill="#545454" text-anchor="end">100</text>
<text x="130.4" y="890.3" font-size="9.5" fill="#545454" text-anchor="end">200</text>
<text x="130.4" y="863.25" font-size="9.5" fill="#545454" text-anchor="end">300</text>
<text x="130.4" y="836.2" font-size="9.5" fill="#545454" text-anchor="end">400</text>
<text x="130.4" y="809.15" font-size="9.5" fill="#545454" text-anchor="end">500</text>
<text x="130.4" y="782.1" font-size="9.5" fill="#545454" text-anchor="end">600</text>
<text x="130.4" y="755.05" font-size="9.5" fill="#545454" text-anchor="end">700</text>
<text x="130.4" y="728.0" font-size="9.5" fill="#545454" text-anchor="end">800</text>
<text x="1757.8" y="944.4" font-size="9.5" fill="#545454" text-anchor="start">0</text>
<line x1="1748.6" y1="942.00" x2="1751.6" y2="942.00" stroke="#bbb" stroke-width="0.8"/>
<text x="1757.8" y="917.35" font-size="9.5" fill="#545454" text-anchor="start">13</text>
<line x1="1748.6" y1="914.95" x2="1751.6" y2="914.95" stroke="#bbb" stroke-width="0.8"/>
<text x="1757.8" y="890.3" font-size="9.5" fill="#545454" text-anchor="start">25</text>
<line x1="1748.6" y1="887.90" x2="1751.6" y2="887.90" stroke="#bbb" stroke-width="0.8"/>
<text x="1757.8" y="863.25" font-size="9.5" fill="#545454" text-anchor="start">38</text>
<line x1="1748.6" y1="860.85" x2="1751.6" y2="860.85" stroke="#bbb" stroke-width="0.8"/>
<text x="1757.8" y="836.2" font-size="9.5" fill="#545454" text-anchor="start">50</text>
<line x1="1748.6" y1="833.80" x2="1751.6" y2="833.80" stroke="#bbb" stroke-width="0.8"/>
<text x="1757.8" y="809.15" font-size="9.5" fill="#545454" text-anchor="start">63</text>
<line x1="1748.6" y1="806.75" x2="1751.6" y2="806.75" stroke="#bbb" stroke-width="0.8"/>
<text x="1757.8" y="782.1" font-size="9.5" fill="#545454" text-anchor="start">75</text>
<line x1="1748.6" y1="779.70" x2="1751.6" y2="779.70" stroke="#bbb" stroke-width="0.8"/>
<text x="1757.8" y="755.05" font-size="9.5" fill="#545454" text-anchor="start">88</text>
<line x1="1748.6" y1="752.65" x2="1751.6" y2="752.65" stroke="#bbb" stroke-width="0.8"/>
<text x="1757.8" y="728.0" font-size="9.5" fill="#545454" text-anchor="start">100</text>
<line x1="1748.6" y1="725.60" x2="1751.6" y2="725.60" stroke="#bbb" stroke-width="0.8"/>
<text x="0" y="0" font-size="11" fill="#484848" font-weight="bold" text-anchor="middle" textLength="57" lengthAdjust="spacingAndGlyphs" transform="translate(1778.2 833.5) rotate(90)">Torque (%)</text>
<path d="M142.60 942.00 L585.80 942.00 L590.60 905.86 L595.20 942.00 L667.80 942.00 L676.00 821.47 C676.72 821.43 678.02 820.20 680.30 821.25 C682.58 822.29 686.58 826.41 689.70 827.74 C692.82 829.08 696.40 829.65 699.00 829.26 C701.60 828.86 701.38 823.99 705.30 825.36 C709.22 826.73 718.59 835.86 722.50 837.48 C726.41 839.10 727.71 835.50 728.75 835.10 L737.50 942.00 L1249.60 942.00 L1254.40 872.75 L1258.80 942.00 L1297.80 942.00 L1307.70 819.08 C1309.42 818.94 1315.00 818.40 1318.00 818.22 C1321.00 818.04 1322.83 817.71 1325.70 818.00 C1328.57 818.29 1333.62 819.63 1335.20 819.95 L1341.20 851.54 L1344.60 942.00 L1748.60 942.00" fill="none" stroke="#000" stroke-opacity="0.08" stroke-width="3" transform="translate(0 2)" stroke-linejoin="round"/>
<path d="M142.60 942.00 L585.40 942.00 L590.60 870.32 L595.60 942.00 L667.40 942.00 L676.00 759.68 C676.72 759.59 678.02 758.33 680.30 759.14 C682.58 759.95 686.58 763.38 689.70 764.55 C692.82 765.72 696.40 766.56 699.00 766.18 C701.60 765.79 703.33 762.39 705.30 762.25 C707.27 762.12 707.93 763.61 710.80 765.36 C713.67 767.12 719.51 771.88 722.50 772.80 C725.49 773.73 727.71 771.22 728.75 770.91 L738.70 942.00 L1249.20 942.00 L1254.40 802.15 L1259.90 925.77 L1263.80 942.00 L1297.40 942.00 L1306.80 757.52 C1308.17 757.43 1312.80 757.16 1315.00 756.98 C1317.20 756.80 1318.22 756.62 1320.00 756.44 C1321.78 756.26 1323.87 755.76 1325.70 755.90 C1327.53 756.03 1329.42 756.98 1331.00 757.25 C1332.58 757.52 1334.50 757.47 1335.20 757.52 L1341.20 804.59 L1345.20 942.00 L1748.60 942.00" fill="none" stroke="#000" stroke-opacity="0.08" stroke-width="3" transform="translate(0 2)" stroke-linejoin="round"/>
<rect x="142.6" y="725.6" width="1606.0" height="216.39999999999998" fill="none" stroke="#6a6a6a" stroke-width="1.2"/>
<path d="M142.60 942.00 L585.40 942.00 L590.60 870.32 L595.60 942.00 L667.40 942.00 L676.00 759.68 C676.72 759.59 678.02 758.33 680.30 759.14 C682.58 759.95 686.58 763.38 689.70 764.55 C692.82 765.72 696.40 766.56 699.00 766.18 C701.60 765.79 703.33 762.39 705.30 762.25 C707.27 762.12 707.93 763.61 710.80 765.36 C713.67 767.12 719.51 771.88 722.50 772.80 C725.49 773.73 727.71 771.22 728.75 770.91 L738.70 942.00 L1249.20 942.00 L1254.40 802.15 L1259.90 925.77 L1263.80 942.00 L1297.40 942.00 L1306.80 757.52 C1308.17 757.43 1312.80 757.16 1315.00 756.98 C1317.20 756.80 1318.22 756.62 1320.00 756.44 C1321.78 756.26 1323.87 755.76 1325.70 755.90 C1327.53 756.03 1329.42 756.98 1331.00 757.25 C1332.58 757.52 1334.50 757.47 1335.20 757.52 L1341.20 804.59 L1345.20 942.00 L1748.60 942.00" fill="none" stroke="#e9a21c" stroke-width="2" stroke-linejoin="round"/>
<path d="M142.60 942.00 L585.80 942.00 L590.60 905.86 L595.20 942.00 L667.80 942.00 L676.00 821.47 C676.72 821.43 678.02 820.20 680.30 821.25 C682.58 822.29 686.58 826.41 689.70 827.74 C692.82 829.08 696.40 829.65 699.00 829.26 C701.60 828.86 701.38 823.99 705.30 825.36 C709.22 826.73 718.59 835.86 722.50 837.48 C726.41 839.10 727.71 835.50 728.75 835.10 L737.50 942.00 L1249.60 942.00 L1254.40 872.75 L1258.80 942.00 L1297.80 942.00 L1307.70 819.08 C1309.42 818.94 1315.00 818.40 1318.00 818.22 C1321.00 818.04 1322.83 817.71 1325.70 818.00 C1328.57 818.29 1333.62 819.63 1335.20 819.95 L1341.20 851.54 L1344.60 942.00 L1748.60 942.00" fill="none" stroke="#84a076" stroke-width="1.7" stroke-linejoin="round"/>
<line x1="142.6" y1="942.0" x2="1748.6" y2="942.0" stroke="#77844f" stroke-width="2.2"/>
<rect x="879.8" y="976.6" width="15.3" height="2.4" fill="#f0943a"/>
<text x="908.7" y="981.6" font-size="12.7" fill="#626a80" text-anchor="start" textLength="57.6" lengthAdjust="spacingAndGlyphs">Current (A)</text>
<rect x="981.2" y="976.6" width="14.8" height="2.4" fill="#7d9a67"/>
<text x="1009.1" y="981.6" font-size="12.7" fill="#626a80" text-anchor="start" textLength="56" lengthAdjust="spacingAndGlyphs">Torque (%)</text>
<text x="867" y="998.8" font-size="12.5" fill="#c64f4c" text-anchor="end" stroke="#c64f4c" stroke-width="0.35">min</text>
<text x="967" y="998.8" font-size="12.5" fill="#62687a" text-anchor="end">0</text>
<text x="1066.2" y="998.8" font-size="12.5" fill="#62687a" text-anchor="end">0</text>
<text x="867" y="1018.8" font-size="12.5" fill="#c64f4c" text-anchor="end" stroke="#c64f4c" stroke-width="0.35">max</text>
<text x="967" y="1018.8" font-size="12.5" fill="#62687a" text-anchor="end">686.7</text>
<text x="1066.2" y="1018.8" font-size="12.5" fill="#62687a" text-anchor="end">57.6</text>
<text x="867" y="1039" font-size="12.5" fill="#c64f4c" text-anchor="end" stroke="#c64f4c" stroke-width="0.35">avg</text>
<text x="967" y="1039" font-size="12.5" fill="#62687a" text-anchor="end">44.63</text>
<text x="1066.2" y="1039" font-size="12.5" fill="#62687a" text-anchor="end">3.59</text>
<rect x="105" y="1065" width="1694" height="54" fill="#fff"/>
<path d="M127.4 1083 q0 -2.4 2.5 -2.4 t2.5 2.4 v8.6 a5 5 0 1 1 -5 0 z" fill="#6cc24a"/>
<rect x="129.3" y="1082.6" width="1.2" height="6" fill="#dff1d3"/>
<text x="146.7" y="1094.5" font-size="16.3" fill="#5d6273" text-anchor="start" textLength="122" lengthAdjust="spacingAndGlyphs">Temperature (◦C)</text>
<circle cx="139.9" cy="1118" r="8.4" fill="none" stroke="#2e2e2e" stroke-width="1.7"/>
<path d="M139.4 1113 V1118.6" fill="none" stroke="#2e2e2e" stroke-width="1.6"/>
<text x="156.3" y="1122.7" font-size="14" fill="#6a7290" text-anchor="start" textLength="131.8" lengthAdjust="spacingAndGlyphs">Realtime - last 7 days</text>
<path d="M1736.3 1087.5 q0 -1.5 1.5 -1.5 h6.5 l5 5 v10.5 q0 1.5 -1.5 1.5 h-10 q-1.5 0 -1.5 -1.5 z" fill="#253a4d"/><path d="M1744.3 1086 v5 h5 z" fill="#fff" opacity="0.9"/><path d="M1739.5 1100 l5 -5 M1741.1 1095 h3.4 v3.4" fill="none" stroke="#fff" stroke-width="1.6"/>
<path d="M1769.7 1092.3 V1088.8 H1773.2 M1777.6000000000001 1088.8 H1781.1000000000001 V1092.3 M1781.1000000000001 1096.7 V1100.2 H1777.6000000000001 M1773.2 1100.2 H1769.7 V1096.7" fill="none" stroke="#2a2a2a" stroke-width="1.9"/>
<rect x="0" y="1119" width="1920" height="161" fill="#fff"/>
</svg></body></html>
